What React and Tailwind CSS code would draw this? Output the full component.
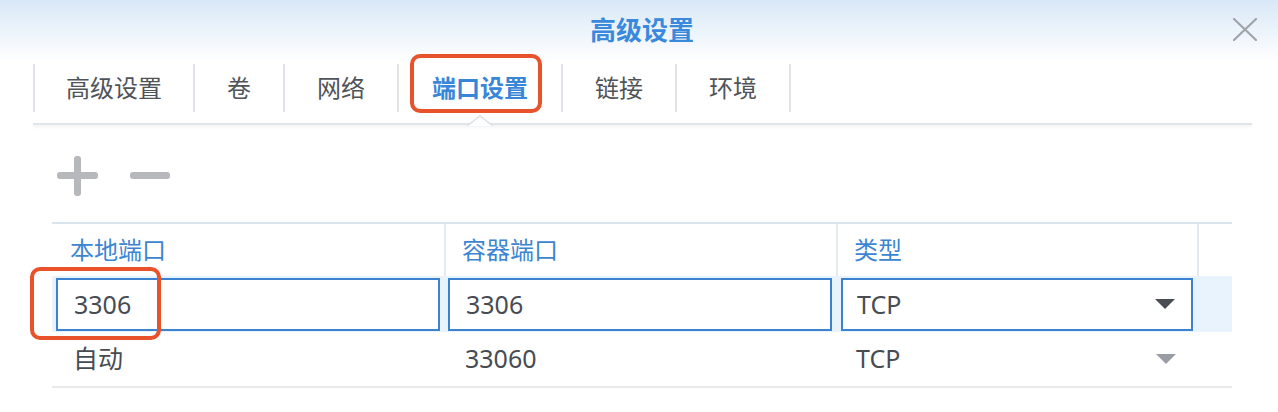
const tabs = ['高级设置', '卷', '网络', '端口设置', '链接', '环境'];

function Caret({ color }) {
  return (
    <svg width="20" height="11" viewBox="0 0 20 11" aria-hidden="true">
      <path d="M0 0 H20 L10 10 Z" fill={color} />
    </svg>
  );
}

function Cell({ children, className = '' }) {
  return <div className={`flex items-center ${className}`}>{children}</div>;
}

export default function App() {
  return (
    <div
      className="relative w-[1278px] h-[412px] bg-white overflow-hidden"
      style={{ fontFamily: '"Noto Sans", "Noto Sans CJK SC", sans-serif' }}
    >
      {/* dialog header */}
      <div className="grid grid-cols-[1fr_auto_1fr] items-center h-[62px] bg-gradient-to-b from-[#d9e8f7] to-white">
        <div />
        <h1 className="text-[26px] font-bold text-[#3a89dc] leading-none -mt-[2px] ml-[6px]">高级设置</h1>
        <div className="flex justify-end pr-[21px] -mt-[4px]">
          <svg width="24" height="23" viewBox="0 0 24 23" aria-hidden="true">
            <path d="M1 1 L23 22 M23 1 L1 22" stroke="#a0a4a9" strokeWidth="2.2" strokeLinecap="round" />
          </svg>
        </div>
      </div>

      {/* tabs */}
      <div className="mt-[2px] ml-[33px] mr-[26px]">
        <div className="flex h-[48px]">
          {tabs.map((t, i) => (
            <div
              key={t}
              className={`relative flex items-center border-r-2 border-[#dfe3e7] text-[24px] leading-none ${
                i === 0 ? 'border-l-2 px-[31px]' : t === '端口设置' ? 'px-[33px]' : 'px-[32px]'
              } ${t === '端口设置' ? 'text-[#3a86d6] font-bold' : 'text-[#4f5459]'}`}
            >
              {t}
              {t === '端口设置' && (
                <svg
                  className="absolute left-1/2 -translate-x-1/2 top-[51px]"
                  width="26"
                  height="12"
                  viewBox="0 0 26 12"
                  aria-hidden="true"
                >
                  <path d="M0 11 L13 1 L26 11" fill="white" stroke="#dde1e5" strokeWidth="1.5" />
                </svg>
              )}
            </div>
          ))}
        </div>
        <div className="mt-[11px] h-[2px] bg-[#e2e5e8] shadow-[0_2px_3px_rgba(0,0,0,0.07)]" />
      </div>

      {/* toolbar */}
      <div className="flex items-center gap-[32px] ml-[57px] mt-[31px]">
        <svg width="41" height="40" viewBox="0 0 41 40" aria-hidden="true">
          <rect x="0" y="16" width="41" height="7" rx="3" fill="#b6b8bb" />
          <rect x="17" y="0" width="7" height="40" rx="3" fill="#b6b8bb" />
        </svg>
        <svg width="40" height="40" viewBox="0 0 40 40" aria-hidden="true">
          <rect x="0" y="16" width="40" height="7" rx="3" fill="#b6b8bb" />
        </svg>
      </div>

      {/* port table */}
      <div className="ml-[52px] w-[1180px] mt-[26px] border-t-2 border-[#d9e4ee]">
        <div className="grid grid-cols-[394px_392px_361px_33px] h-[52px] text-[24px] text-[#3d85d1]">
          <Cell className="pl-[18px] border-r-2 border-[#e4eaf0]">本地端口</Cell>
          <Cell className="pl-[16px] border-r-2 border-[#e4eaf0]">容器端口</Cell>
          <Cell className="pl-[16px] border-r-2 border-[#e4eaf0]">类型</Cell>
          <div />
        </div>

        <div className="grid grid-cols-[394px_392px_361px_33px] h-[56px] pt-[2px] bg-[#e8f3fd] text-[25px] text-[#474c52]">
          <div className="pl-[4px] pr-[6px]">
            <div className="h-[53px] flex items-center pl-[16px] bg-white border-2 border-[#3b82d0]">3306</div>
          </div>
          <div className="pl-[2px] pr-[6px]">
            <div className="h-[53px] flex items-center pl-[16px] bg-white border-2 border-[#3b82d0]">3306</div>
          </div>
          <div className="pl-[3px] pr-[6px]">
            <div className="h-[53px] flex items-center justify-between pl-[14px] pr-[16px] bg-white border-2 border-[#3b82d0]">
              <span>TCP</span>
              <Caret color="#4a4e53" />
            </div>
          </div>
          <div />
        </div>

        <div className="grid grid-cols-[394px_392px_361px_33px] h-[56px] border-b-2 border-[#e8eaec] text-[25px] text-[#474c52]">
          <Cell className="pl-[21px]">自动</Cell>
          <Cell className="pl-[19px]">33060</Cell>
          <Cell className="pl-[18px] pr-[23px] justify-between">
            <span>TCP</span>
            <Caret color="#9a9ea4" />
          </Cell>
          <div />
        </div>
      </div>

      {/* annotation highlights */}
      <div className="absolute left-[410px] top-[54px] w-[132px] h-[59px] border-[4px] border-[#e9532c] rounded-[10px]" />
      <div className="absolute left-[30px] top-[267px] w-[131px] h-[73px] border-[4px] border-[#e9532c] rounded-[10px]" />
    </div>
  );
}
